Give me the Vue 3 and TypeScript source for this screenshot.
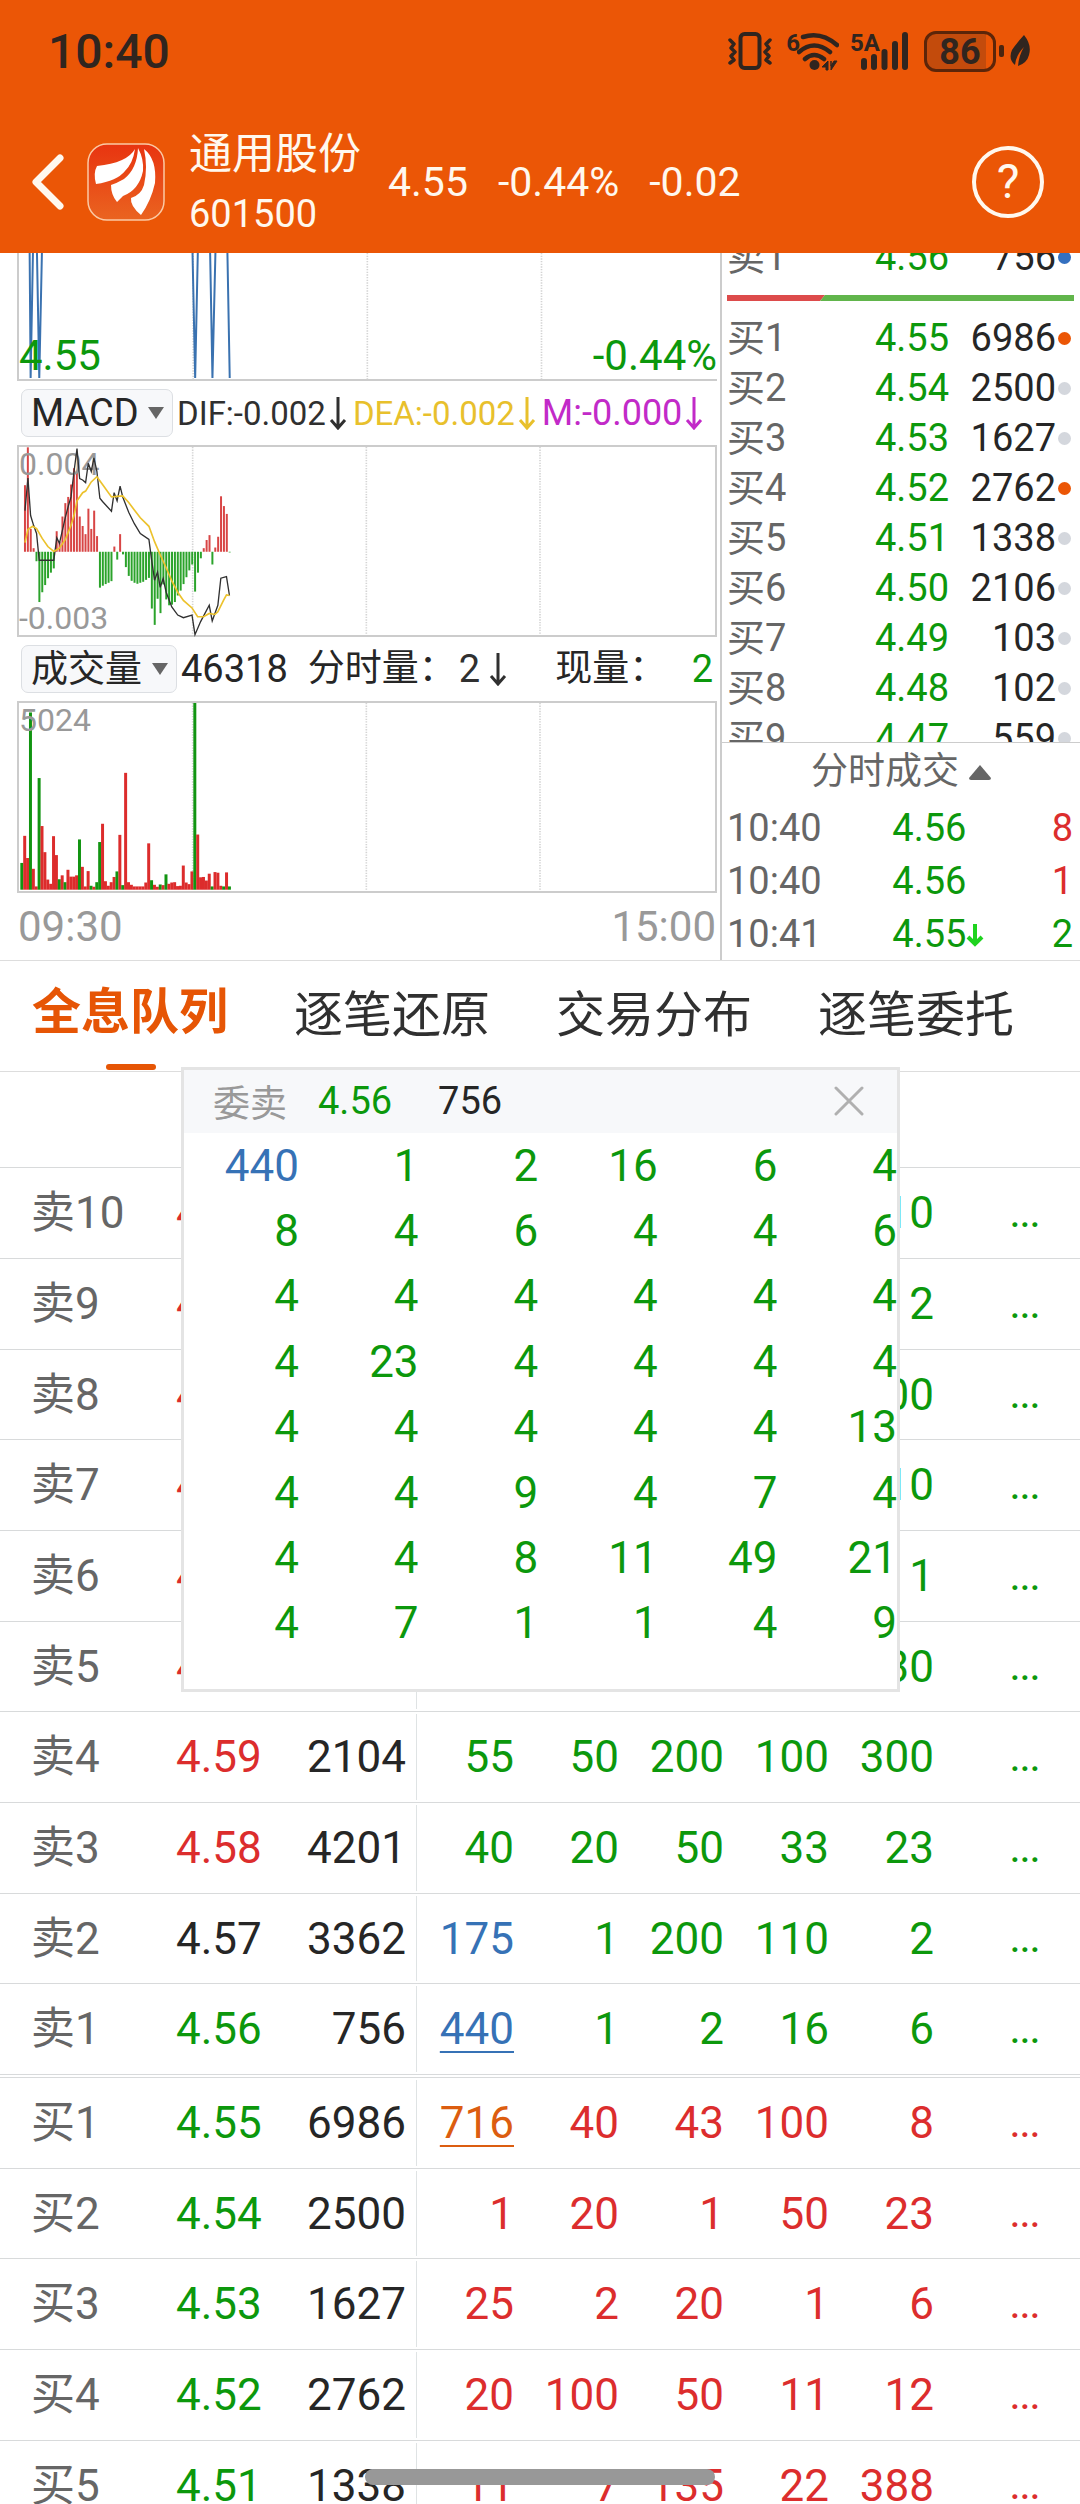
<script setup lang="ts">
import { ref } from 'vue'

type Tone = 'up' | 'down' | 'flat' | 'blue' | 'orange'

interface Level {
  label: string
  price: string
  tone: Tone
  volume: string
  queue: string[]
  mark?: Tone
  linked?: boolean
}

interface BookRow {
  label: string
  price: string
  qty: string
  dot: string
}

const tabs = ['全息队列', '逐笔还原', '交易分布', '逐笔委托']
const activeTab = ref(0)
const popupOpen = ref(true)

const bookBuys: BookRow[] = [
  { label: '买1', price: '4.55', qty: '6986', dot: 'hot' },
  { label: '买2', price: '4.54', qty: '2500', dot: 'idle' },
  { label: '买3', price: '4.53', qty: '1627', dot: 'idle' },
  { label: '买4', price: '4.52', qty: '2762', dot: 'hot' },
  { label: '买5', price: '4.51', qty: '1338', dot: 'idle' },
  { label: '买6', price: '4.50', qty: '2106', dot: 'idle' },
  { label: '买7', price: '4.49', qty: '103', dot: 'idle' },
  { label: '买8', price: '4.48', qty: '102', dot: 'idle' },
  { label: '买9', price: '4.47', qty: '559', dot: 'idle' },
]

const ticks = [
  { time: '10:40', price: '4.56', qty: '8', tone: 'up', falling: false },
  { time: '10:40', price: '4.56', qty: '1', tone: 'up', falling: false },
  { time: '10:41', price: '4.55', qty: '2', tone: 'down', falling: true },
]

const sells: Level[] = [
  { label: '卖10', price: '4.65', tone: 'up', volume: '', queue: ['', '', '', '', '10'] },
  { label: '卖9', price: '4.64', tone: 'up', volume: '', queue: ['', '', '', '', '2'] },
  { label: '卖8', price: '4.63', tone: 'up', volume: '', queue: ['', '', '', '', '00'] },
  { label: '卖7', price: '4.62', tone: 'up', volume: '', queue: ['', '', '', '', '10'] },
  { label: '卖6', price: '4.61', tone: 'up', volume: '', queue: ['', '', '', '', '1'] },
  { label: '卖5', price: '4.60', tone: 'up', volume: '', queue: ['', '', '', '', '30'] },
  { label: '卖4', price: '4.59', tone: 'up', volume: '2104', queue: ['55', '50', '200', '100', '300'] },
  { label: '卖3', price: '4.58', tone: 'up', volume: '4201', queue: ['40', '20', '50', '33', '23'] },
  { label: '卖2', price: '4.57', tone: 'flat', volume: '3362', queue: ['175', '1', '200', '110', '2'], mark: 'blue' },
  { label: '卖1', price: '4.56', tone: 'down', volume: '756', queue: ['440', '1', '2', '16', '6'], mark: 'blue', linked: true },
]

const buys: Level[] = [
  { label: '买1', price: '4.55', tone: 'down', volume: '6986', queue: ['716', '40', '43', '100', '8'], mark: 'orange', linked: true },
  { label: '买2', price: '4.54', tone: 'down', volume: '2500', queue: ['1', '20', '1', '50', '23'] },
  { label: '买3', price: '4.53', tone: 'down', volume: '1627', queue: ['25', '2', '20', '1', '6'] },
  { label: '买4', price: '4.52', tone: 'down', volume: '2762', queue: ['20', '100', '50', '11', '12'] },
  { label: '买5', price: '4.51', tone: 'down', volume: '1338', queue: ['11', '7', '135', '22', '388'] },
]

const orders = [
  [440, 1, 2, 16, 6, 4],
  [8, 4, 6, 4, 4, 6],
  [4, 4, 4, 4, 4, 4],
  [4, 23, 4, 4, 4, 4],
  [4, 4, 4, 4, 4, 13],
  [4, 4, 9, 4, 7, 4],
  [4, 4, 8, 11, 49, 21],
  [4, 7, 1, 1, 4, 9],
]

// One value per minute; positive bars rise above the zero line.
const macd = [
  204, 320, 70, 11, -29, -154, -124, -102, -81, -64, -51, 63, 31, 108, 149, 168, 206, 256, 246, 108, 79, 54, 132, 70, 126,
  48, -110, -104, -99, -95, -90, 16, -24, 54, -8, -47, -74, -89, -95, -98, -95, -92, -86, -80, -174, -224, -144, -188,
  -100, -146, -164, -162, -154, -134, -119, -99, -78, -57, -39, -122, -64, -20, 11, 36, 51, -39, 13, 46, 170, 140, 116, -2,
]

// Minute volume; negative entries are drawn in green.
const volume = [
  -82, 165, 97, -543, 64, 10, -342, 195, 115, 31, 18, 164, 106, -32, 44, -23, 61, 40, 40, 44, -154, 70, 10, 57, -12, 9,
  -23, -146, 202, 26, 12, 23, 39, -56, 168, -14, 358, 23, 15, 10, 10, 10, 10, 22, 142, -29, 15, 9, -16, 14, -47, 18, 22,
  23, 11, 12, 74, 22, 17, 56, -572, 169, 38, 39, 28, 49, -10, 54, 52, 12, -10, 53, -10,
]

const dif =
  '72,810 81,710 89,825 98,855 107,880 115,962 159,962 168,893 176,910 194,830 203,795 211,768 220,690 229,620 237,712 246,716 255,724 263,665 272,690 280,648 289,690 298,772 306,782 333,812 341,755 350,780 359,735 367,768 385,815 402,850 420,880 446,898 454,960 463,1023 472,998 480,1045 489,1018 498,1060 515,1105 533,1130 550,1138 576,1130 585,1190 602,1150 628,1100 637,1148 654,1100 663,1017 680,1012 689,1070'
const dea =
  '72,908 81,868 95,858 107,865 124,895 141,920 159,935 176,925 194,898 211,855 220,825 229,780 246,755 255,750 272,722 289,706 306,730 333,768 367,765 385,785 402,808 420,832 446,858 463,905 480,945 498,985 515,1025 533,1060 550,1085 576,1108 593,1135 611,1135 628,1125 645,1128 654,1120 671,1085 680,1068 689,1070'
const gridX = [578, 1102, 1626]
</script>

<template>
  <div class="screen" lang="zh-CN">
    <header class="top">
      <div class="status">
        <span class="clock">10:40</span>
        <div class="status-icons">
          <svg class="vibrate" viewBox="0 0 44 38" fill="none" stroke="#30251f">
            <rect x="12.500" y="2" width="19" height="34" rx="4" stroke-width="4" />
            <path d="M2 8l4 4-3 4 4 4-4 4 3 4-4 3M42 8l-4 4 3 4-4 4 4 4-3 4 4 3" stroke-width="3.500" stroke-linecap="round" stroke-linejoin="round" />
          </svg>
          <span class="wifi-gen">6</span>
          <svg class="wifi" viewBox="0 0 42 40" fill="none" stroke="#30251f" stroke-width="4.500">
            <path d="M6 6Q24 0 40 14M2 21Q17 8 33 21M8 28Q17 20 27 28" stroke-linecap="round" />
            <circle cx="17.500" cy="34" r="5" fill="#30251f" stroke="none" />
            <path d="M25 36l6-6v9h-2v-3zM34 39V30l0 5l3-5h3l-6 9" fill="#30251f" stroke-width="1" />
          </svg>
          <span class="net">5A</span>
          <svg class="signal" viewBox="0 0 48 38" stroke="#30251f" stroke-width="6" stroke-linecap="round">
            <path d="M3 29v6M13 25v10M23.500 20v15M34 12v23M44 3v32" />
          </svg>
          <span class="battery"><span>86</span></span>
          <span class="nub"></span>
          <svg class="leaf" viewBox="0 0 20 33" fill="#30251f">
            <path d="M14 0Q22 10 19 20Q17 28 8 31Q9 20 14 12Q6 20 5 30Q-2 24 2 15Q5 10 14 0z" />
          </svg>
        </div>
      </div>
      <div class="title-bar">
        <button class="back" aria-label="返回">
          <svg viewBox="0 0 34 58" fill="none" stroke="#fff8ee" stroke-width="7" stroke-linecap="round" stroke-linejoin="round">
            <path d="M29 5L5 29l24 24" />
          </svg>
        </button>
        <svg class="logo" viewBox="0 0 78 78">
          <defs>
            <linearGradient id="logoFill" x1="0" y1="0" x2="0" y2="1">
              <stop offset="0" stop-color="#e83410" />
              <stop offset="1" stop-color="#ea6420" />
            </linearGradient>
          </defs>
          <rect x="1" y="1" width="76" height="76" rx="19" fill="url(#logoFill)" stroke="#fbc9a4" stroke-width="1.500" />
          <g fill="#fff">
            <path d="M48 6Q40 20 10 23Q6 30 9 41Q30 38 38 28Q46 20 48 6z" />
            <path d="M51 5Q50 26 37 36Q30 40 24 42Q24 52 30 59L36 53Q52 47 56 28Q57 16 51 5z" />
            <path d="M57 6Q61 24 57 42Q54 52 44 55Q43 63 54 72Q64 58 68 40Q70 16 57 6z" />
          </g>
        </svg>
        <div class="stock">
          <h1>通用股份</h1>
          <span>601500</span>
        </div>
        <div class="quote"><span>4.55</span><span>-0.44%</span><span>-0.02</span></div>
        <button class="help" aria-label="帮助">?</button>
      </div>
    </header>

    <section class="market">
      <div class="charts">
        <div class="plot price">
          <svg viewBox="54 39 2100 378" preserveAspectRatio="none">
            <path v-for="x in gridX" :key="x" class="grid" :d="`M${x} 39V417`" />
            <path
              d="M86 36L89 414L96 36M108 36L115 414L123 36M576 36L584 414L592 36M629 36L636 414L645 36M681 36L688 414"
              fill="none"
              stroke="#3a72b0"
              stroke-width="6"
            />
          </svg>
          <span class="low down">4.55</span>
          <span class="low right down">-0.44%</span>
        </div>

        <div class="legend">
          <label class="picker macd-picker">
            <select aria-label="指标"><option>MACD</option></select>
            <svg viewBox="0 0 16 12"><path d="M0 0h16L8 12z" fill="#666" /></svg>
          </label>
          <span class="ind dif">DIF:-0.002<svg viewBox="0 0 18 34"><path d="M9 1v30M2 24l7 8 7-8" /></svg></span>
          <span class="ind dea">DEA:-0.002<svg viewBox="0 0 18 34"><path d="M9 1v30M2 24l7 8 7-8" /></svg></span>
          <span class="ind m">M:-0.000<svg viewBox="0 0 18 34"><path d="M9 1v30M2 24l7 8 7-8" /></svg></span>
        </div>

        <div class="plot framed">
          <svg viewBox="54 615 2100 576" preserveAspectRatio="none">
            <path v-for="x in gridX" :key="x" class="grid" :d="`M${x} 615V1191`" />
            <rect
              v-for="(v, i) in macd"
              :key="i"
              :x="69 + i * 8.7"
              :y="v > 0 ? 936 - v : 936"
              width="6"
              :height="Math.abs(v)"
              :fill="v > 0 ? '#d84545' : '#2ba32b'"
            />
          </svg>
          <span class="scale high">0.004</span>
          <span class="scale bottom">-0.003</span>
          <svg class="over" viewBox="54 615 2100 576" preserveAspectRatio="none" fill="none">
            <polyline :points="dif" stroke="#303030" stroke-width="4" />
            <polyline :points="dea" stroke="#ecc22c" stroke-width="5" />
          </svg>
        </div>

        <div class="legend">
          <label class="picker vol-picker">
            <select aria-label="副图"><option>成交量</option></select>
            <svg viewBox="0 0 16 12"><path d="M0 0h16L8 12z" fill="#666" /></svg>
          </label>
          <span class="total">46318</span>
          <span class="cn minute">分时量：</span>
          <span class="ind count">2<svg viewBox="0 0 18 34"><path d="M9 1v30M2 24l7 8 7-8" /></svg></span>
          <span class="cn now">现量：</span>
          <span class="last down">2</span>
        </div>

        <div class="plot framed">
          <span class="scale high">5024</span>
          <svg viewBox="54 213 2100 576" preserveAspectRatio="none">
            <path v-for="x in gridX" :key="x" class="grid" :d="`M${x} 213V789`" />
            <rect
              v-for="(v, i) in volume"
              :key="i"
              :x="58 + i * 8.7"
              :y="785 - Math.abs(v)"
              width="9"
              :height="Math.abs(v)"
              :fill="v > 0 ? '#dc2c2c' : '#119411'"
            />
          </svg>
        </div>

        <div class="times"><span>09:30</span><span>15:00</span></div>
      </div>

      <div class="side">
        <div class="book">
          <div class="cut">
            <table>
              <colgroup><col /><col class="c-price" /><col class="c-qty" /><col class="c-dot" /></colgroup>
              <tbody>
                <tr>
                  <td class="lab">卖1</td>
                  <td class="num down">4.56</td>
                  <td class="num">756</td>
                  <td><i class="dot sell"></i></td>
                </tr>
              </tbody>
            </table>
          </div>
          <svg class="ratio" viewBox="0 0 347 6" preserveAspectRatio="none">
            <path d="M0 0H98L93 6H0z" fill="#dd4b4b" />
            <path d="M98 0H347V6H93z" fill="#61b54b" />
          </svg>
          <table>
            <colgroup><col /><col class="c-price" /><col class="c-qty" /><col class="c-dot" /></colgroup>
            <tbody>
              <tr v-for="r in bookBuys" :key="r.label">
                <td class="lab">{{ r.label }}</td>
                <td class="num down">{{ r.price }}</td>
                <td class="num">{{ r.qty }}</td>
                <td><i class="dot" :class="r.dot"></i></td>
              </tr>
            </tbody>
          </table>
        </div>
        <button class="ticks-head">
          分时成交
          <svg viewBox="0 0 22 15"><path d="M11 0L22 13Q22 15 20 15H2Q0 15 0 13z" fill="#666" /></svg>
        </button>
        <table class="ticks">
          <tbody>
            <tr v-for="(t, i) in ticks" :key="i">
              <td class="lab">{{ t.time }}</td>
              <td class="down">
                {{ t.price }}<svg v-if="t.falling" viewBox="0 0 18 24"><path d="M9 1v20M2 14l7 7 7-7" /></svg>
              </td>
              <td class="num" :class="t.tone">{{ t.qty }}</td>
            </tr>
          </tbody>
        </table>
      </div>
    </section>

    <nav class="tabs">
      <button v-for="(t, i) in tabs" :key="t" :class="{ active: i === activeTab }" @click="activeTab = i">{{ t }}</button>
    </nav>

    <main class="depth">
      <table class="levels">
        <colgroup>
          <col class="w-label" /><col class="w-price" /><col class="w-vol" /><col class="w-first" />
          <col v-for="n in 4" :key="n" class="w-queue" /><col class="w-more" />
        </colgroup>
        <thead>
          <tr><td colspan="9"></td></tr>
        </thead>
        <tbody>
          <tr v-for="l in sells" :key="l.label">
            <td class="lab">{{ l.label }}</td>
            <td :class="l.tone">{{ l.price }}</td>
            <td class="vol">{{ l.volume }}</td>
            <td v-for="(q, i) in l.queue" :key="i" class="q" :class="i === 0 && l.mark ? l.mark : 'down'">
              <span :class="{ linked: i === 0 && l.linked }">{{ q }}</span>
            </td>
            <td class="more down"><span>...</span></td>
          </tr>
        </tbody>
        <tbody>
          <tr class="split"><td colspan="9"></td></tr>
          <tr v-for="l in buys" :key="l.label">
            <td class="lab">{{ l.label }}</td>
            <td :class="l.tone">{{ l.price }}</td>
            <td class="vol">{{ l.volume }}</td>
            <td v-for="(q, i) in l.queue" :key="i" class="q" :class="i === 0 && l.mark ? l.mark : 'up'">
              <span :class="{ linked: i === 0 && l.linked }">{{ q }}</span>
            </td>
            <td class="more up"><span>...</span></td>
          </tr>
        </tbody>
      </table>

      <section v-if="popupOpen" class="popup">
        <header>
          <span class="side-name">委卖</span>
          <span class="pop-price down">4.56</span>
          <span>756</span>
          <button aria-label="关闭" @click="popupOpen = false">
            <svg viewBox="0 0 30 30"><path d="M2 2l26 26M28 2L2 28" stroke="#b0b0b0" stroke-width="3" stroke-linecap="round" /></svg>
          </button>
        </header>
        <table>
          <colgroup><col class="p-first" /><col v-for="n in 5" :key="n" /></colgroup>
          <tbody>
            <tr v-for="(row, r) in orders" :key="r">
              <td v-for="(n, c) in row" :key="c" :class="r + c === 0 ? 'blue' : 'down'">{{ n }}</td>
            </tr>
          </tbody>
        </table>
      </section>
    </main>

    <div class="home"></div>
  </div>
</template>

<style>
body {
  margin: 0;
  background: #fff;
}
</style>

<style scoped>
* {
  box-sizing: border-box;
}
.screen {
  position: relative;
  height: 100vh;
  overflow: hidden;
  background: #fff;
  color: #262626;
  font-family: Roboto, 'Noto Sans CJK SC', sans-serif;
}
button,
select {
  padding: 0;
  border: 0;
  background: none;
  color: inherit;
  font: inherit;
}
table {
  width: 100%;
  table-layout: fixed;
  border-collapse: separate;
  border-spacing: 0;
}
td {
  padding: 0;
  white-space: nowrap;
}
svg {
  display: block;
  flex: none;
}
.up { color: #dc2d2d; }
.down { color: #0c980c; }
.flat { color: #262626; }
.blue { color: #3672b6; }
.orange { color: #dc5d10; }
.lab { color: #666; }

/* status bar and title */
.top {
  height: 253px;
  background: #eb5606;
}
.status {
  display: flex;
  align-items: center;
  justify-content: space-between;
  height: 102px;
  padding: 0 50px 0 48px;
  color: #30251f;
}
.clock {
  font-size: 48px;
  font-weight: 500;
}
.status-icons {
  display: flex;
  align-items: center;
}
.vibrate { width: 44px; height: 38px; }
.wifi-gen,
.net {
  align-self: flex-start;
  font-size: 24px;
  font-weight: 700;
  line-height: 24px;
}
.wifi-gen { margin-left: 14px; }
.wifi { width: 42px; height: 40px; margin-left: -3px; }
.net { margin: 0 -19px 0 11px; }
.signal { width: 48px; height: 38px; }
.battery {
  display: grid;
  place-items: center;
  width: 72px;
  height: 41px;
  margin-left: 15px;
  border: 3px solid #5c2509;
  border-radius: 12px;
  background: linear-gradient(90deg, #c34b0c 90%, #eb5606 90%);
  font-size: 36px;
  font-weight: 700;
  line-height: 36px;
}
.nub {
  width: 5px;
  height: 12px;
  margin: 0 6px 0 3px;
  border-radius: 2px;
  background: #4a2410;
}
.leaf { width: 20px; height: 33px; }
.title-bar {
  display: flex;
  align-items: center;
  height: 151px;
  padding: 9px 36px 0 31px;
  color: #fff8ee;
}
.back svg { width: 34px; height: 58px; }
.logo { width: 78px; height: 78px; margin-left: 22px; }
.stock {
  width: 175px;
  margin-left: 24px;
  font-size: 38px;
  line-height: 56px;
}
.stock h1 {
  margin: 0;
  font-size: 43px;
  font-weight: 400;
  line-height: 64px;
}
.quote {
  display: flex;
  gap: 30px;
  margin-left: 24px;
  font-size: 41px;
}
.help {
  width: 72px;
  height: 72px;
  margin-left: auto;
  border: 4px solid #fff8ee;
  border-radius: 50%;
  font-size: 48px;
  line-height: 60px;
}

/* intraday charts */
.market {
  display: grid;
  grid-template-columns: 2fr 1fr;
  height: 708px;
  border-bottom: 1px solid #ddd;
}
.charts { min-width: 0; }
.plot {
  position: relative;
  margin: 0 3px 0 17px;
  border-left: 2px solid #ccc;
}
.plot svg {
  width: 100%;
  height: 100%;
  overflow: visible;
}
.price {
  height: 128px;
  overflow: hidden;
  border-bottom: 2px solid #ccc;
}
.framed {
  height: 192px;
  border: 2px solid #ccc;
}
.plot .over {
  position: absolute;
  inset: 0;
}
.grid {
  stroke: #d4d4d4;
  stroke-width: 5px;
  stroke-dasharray: 4 4;
}
.low {
  position: absolute;
  bottom: 0;
  left: 0;
  font-size: 42px;
  line-height: 46px;
}
.low.right { right: 0; left: auto; }
.scale {
  position: absolute;
  left: 0;
  color: #999;
  font-size: 32px;
  line-height: 34px;
}
.high { top: 0; }
.bottom { bottom: 0; }
.legend {
  display: flex;
  align-items: center;
  height: 64px;
  padding: 0 7px 0 21px;
}
.picker {
  position: relative;
  height: 48px;
  margin-right: 4px;
}
.picker select {
  width: 100%;
  height: 100%;
  padding-left: 9px;
  appearance: none;
  border: 1px solid #dcdfe3;
  border-radius: 7px;
  background: #f7f8fa;
  font-size: 38px;
}
.vol-picker select { font-size: 37px; }
.picker svg {
  position: absolute;
  top: 18px;
  right: 9px;
  width: 16px;
  height: 12px;
  pointer-events: none;
}
.macd-picker { width: 152px; }
.vol-picker { width: 156px; }
.ind {
  display: flex;
  gap: 3px;
  align-items: center;
  margin-right: 6px;
  color: #303030;
  font-size: 33px;
  white-space: nowrap;
}
.ind svg {
  width: 18px;
  height: 34px;
  fill: none;
  stroke: currentColor;
  stroke-width: 3px;
}
.ind.dea { color: #e8c02c; }
.ind.m { margin-right: 0; color: #c22ac8; font-size: 36px; }
.total,
.last,
.ind.count { font-size: 38px; }
.ind.count { gap: 9px; margin: 0 48px 0 3px; }
.cn {
  font-size: 37px;
  line-height: 48px;
}
.minute { margin-left: 20px; }
.last { margin-left: auto; }
.times {
  display: flex;
  justify-content: space-between;
  padding: 0 4px 0 18px;
  color: #999;
  font-size: 42px;
  line-height: 67px;
}

/* order book column */
.side {
  display: flex;
  flex-direction: column;
  min-width: 0;
  border-left: 2px solid #ccc;
  font-size: 38px;
}
.book {
  height: 489px;
  overflow: hidden;
}
.book td {
  height: 50px;
  line-height: 50px;
}
.book .lab,
.ticks .lab { padding-left: 5px; }
.num { text-align: right; }
.c-price { width: 120px; }
.c-qty { width: 107px; }
.c-dot { width: 24px; }
.cut {
  display: flex;
  align-items: flex-end;
  height: 29px;
  overflow: hidden;
}
.ratio {
  width: calc(100% - 11px);
  height: 6px;
  margin: 13px 0 12px 5px;
}
.dot {
  display: block;
  width: 13px;
  height: 13px;
  margin-left: 2px;
  border-radius: 50%;
}
.idle { background: #d4d7dd; }
.hot { background: #eb5606; }
.sell { background: #3470c0; }
.ticks-head {
  display: flex;
  flex: none;
  gap: 10px;
  align-items: center;
  justify-content: center;
  height: 59px;
  border-top: 1px solid #ccc;
  color: #666;
  font-size: 37px;
  line-height: 56px;
}
.ticks-head svg { width: 22px; height: 15px; }
.ticks td {
  height: 53px;
  padding-top: 1px;
  line-height: 52px;
}
.ticks td:nth-child(2) { padding-left: 51px; }
.ticks td:last-child { padding-right: 7px; }
.ticks svg {
  display: inline-block;
  width: 18px;
  height: 24px;
  fill: none;
  stroke: #1fd31f;
  stroke-width: 4px;
}

/* tabs */
.tabs {
  display: flex;
  gap: 66px;
  height: 111px;
  padding: 0 32px;
  border-bottom: 1px solid #ddd;
  color: #303030;
  font-size: 49px;
}
.tabs button {
  position: relative;
  padding-bottom: 11px;
  white-space: nowrap;
}
.tabs .active {
  padding-bottom: 17px;
  color: #e65505;
  font-weight: 700;
}
.tabs .active::after {
  position: absolute;
  bottom: 1px;
  left: 50%;
  width: 50px;
  height: 6px;
  margin-left: -24px;
  border-radius: 3px;
  background: #e65505;
  content: '';
}

/* depth table */
.depth { position: relative; }
.levels { font-size: 44px; }
.levels td {
  height: 91px;
  border-bottom: 1px solid #d8dadb;
  line-height: 60px;
}
.levels tr:nth-child(3n) td { height: 90px; }
.levels thead td { height: 96px; }
.levels .split td { height: 3px; }
.levels .lab { padding-left: 31px; }
.levels .vol {
  padding-right: 11px;
  background: linear-gradient(#dfe3e4, #dfe3e4) right center / 1px calc(100% - 4px) no-repeat;
  text-align: right;
}
.q { text-align: right; }
.linked {
  text-decoration: underline;
  text-decoration-thickness: 2px;
  text-underline-offset: 7px;
}
.levels .more { padding-left: 76px; }
.more span {
  font-size: 36px;
  font-weight: 500;
}
.w-label { width: 176px; }
.w-price { width: 100px; }
.w-vol { width: 141px; }
.w-first { width: 97px; }
.w-queue { width: 105px; }
.w-more { width: 146px; }

/* queue popup over the table */
.popup {
  position: absolute;
  top: -5px;
  right: 180px;
  left: 181px;
  height: 625px;
  overflow: hidden;
  border: 3px solid #e4e4e4;
  background: #fff;
}
.popup header {
  display: flex;
  align-items: center;
  height: 63px;
  padding: 0 33px 2px 29px;
  background: #f7f8fa;
  font-size: 38px;
}
.side-name {
  color: #999;
  font-size: 37px;
}
.pop-price { margin: 0 46px 0 31px; }
.popup header button { margin-left: auto; }
.popup header svg { width: 30px; height: 30px; }
.popup table {
  height: 523px;
  font-size: 44px;
  line-height: 60px;
}
.popup td { text-align: right; }
.p-first { width: 115px; }

.home {
  position: absolute;
  bottom: 19px;
  left: 50%;
  width: 350px;
  height: 16px;
  margin-left: -175px;
  border-radius: 8px;
  background: #989898;
}
</style>
